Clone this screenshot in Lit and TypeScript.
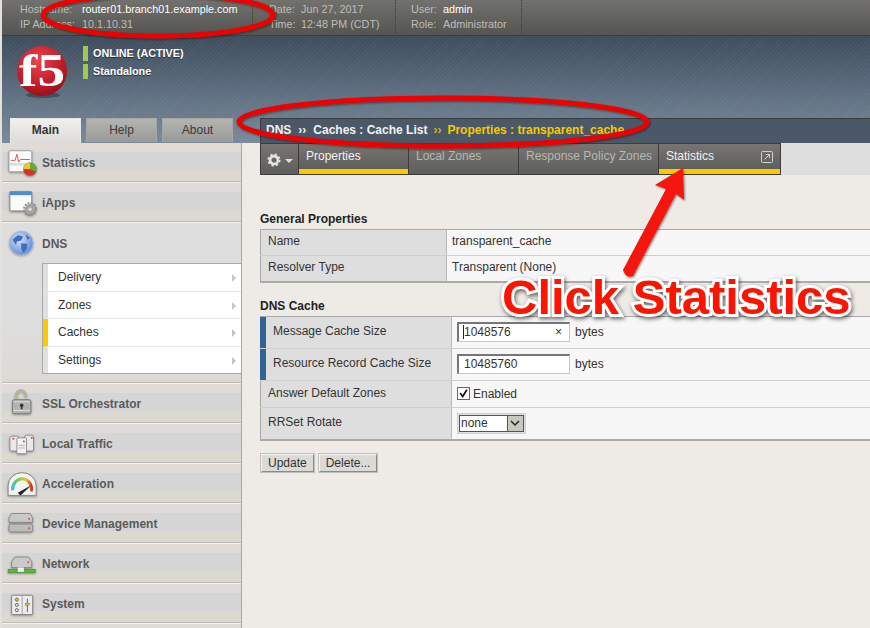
import { LitElement, css, html, svg } from 'lit';
import { customElement } from 'lit/decorators.js';

// sidebar icons, 32x32 viewBox
const icons: Record<string, unknown> = {
  statistics: svg`
    <rect x="0" y="2" width="26" height="24" rx="1" fill="#fbfbfb" stroke="#9a9a9a"/>
    <rect x="1" y="16" width="24" height="3" fill="#cfe0ee"/>
    <path d="M2 13h5l2-7 2 9 2-3h11" fill="none" stroke="#d9473f" stroke-width="1"/>
    <circle cx="24" cy="23" r="7.500" fill="#5fae2e" stroke="#777" stroke-width=".5"/>
    <path d="M24 23v-7.500a7.500 7.500 0 0 0-7.500 7.500z" fill="#f2c230"/>
    <path d="M24 23h-7.500a7.500 7.500 0 0 0 14.300 3z" fill="#d6332b"/>`,
  iapps: svg`
    <rect x="1" y="3" width="25" height="22" rx="1" fill="#fbfbfb" stroke="#7d7d7d"/>
    <rect x="1" y="3" width="25" height="4" fill="#4a8fd6"/>
    <circle cx="24" cy="23" r="6.800" fill="none" stroke="#8a8c8c" stroke-width="2.400" stroke-dasharray="2.200 1.360"/>
    <circle cx="24" cy="23" r="5.800" fill="#a2a4a4"/>
    <circle cx="24" cy="23" r="2" fill="#dcdcdc"/>`,
  dns: svg`
    <defs><radialGradient id="globe" cx=".4" cy=".35" r=".7">
      <stop offset="0" stop-color="#d6e4f8"/><stop offset="1" stop-color="#5a86d6"/>
    </radialGradient></defs>
    <circle cx="14" cy="15" r="13.500" fill="url(#globe)" stroke="#a9b9d6"/>
    <path d="M4 11l6-5 6 1-2 5-5 1-1 4zM14 15l7 1-1 6-4 4-2-5zM19 5l5 4-3 2z" fill="#3f6db8"/>`,
  ssl: svg`
    <path d="M8 12V6a5.500 5.500 0 0 1 11 0v2" fill="none" stroke="#b9b48c" stroke-width="2.600"/>
    <rect x="4" y="11" width="21" height="16" rx="2" fill="#b3b3b0" stroke="#777"/>
    <rect x="5" y="13" width="19" height="1" fill="#e4e4e4"/><rect x="5" y="23" width="19" height="1" fill="#e4e4e4"/>
    <circle cx="14.500" cy="17.500" r="2" fill="#333"/><rect x="13.500" y="18" width="2" height="4" fill="#333"/>`,
  traffic: svg`
    <rect x="1" y="7" width="10" height="17" rx="2" fill="#e8e8e8" stroke="#888"/>
    <rect x="18" y="6" width="10" height="18" rx="2" fill="#e8e8e8" stroke="#888"/>
    <rect x="9" y="9" width="11" height="18" rx="1" fill="#f2f2f2" stroke="#888"/>
    <rect x="11" y="17" width="7" height="1" fill="#aaa"/><rect x="11" y="20" width="7" height="1" fill="#aaa"/>
    <rect x="4" y="9" width="2" height="2" fill="#d9473f"/><rect x="25" y="8" width="2" height="2" fill="#d9473f"/><rect x="16" y="12" width="2" height="2" fill="#d9473f"/>`,
  acceleration: svg`
    <defs><linearGradient id="dial"><stop offset="0" stop-color="#3cc0c0"/><stop offset=".4" stop-color="#8fcf3c"/><stop offset=".7" stop-color="#f2c230"/><stop offset="1" stop-color="#d6332b"/></linearGradient></defs>
    <path d="M-1 29V18a16 15 0 0 1 32 0v11z" fill="#f4f4f2" stroke="#7d7d7d"/>
    <path d="M4 23a11 13 0 0 1 22 0" fill="none" stroke="url(#dial)" stroke-width="3.500"/>
    <path d="M10 26l16-9-13 12z" fill="#222"/>
    <path d="M24 24l3-4v5z" fill="#d6332b"/>`,
  device: svg`
    <path d="M0 9l3-5h21l3 5v5H0z" fill="#c9c9c7" stroke="#858585"/>
    <rect x="0" y="16" width="27" height="9" rx="2" fill="#bcbcba" stroke="#858585"/>
    <rect x="22" y="9" width="2" height="2" fill="#e04a40"/><rect x="22" y="20" width="2" height="2" fill="#e04a40"/>`,
  network: svg`
    <path d="M3 20v-7l4-5h15l4 5v7z" fill="#c9c9c7" stroke="#858585"/>
    <rect x="21" y="13" width="2" height="2" fill="#e04a40"/>
    <rect x="-1" y="22" width="31" height="4" fill="#4fc22f" stroke="#567a4a" stroke-width=".7"/>
    <rect x="10" y="20" width="7" height="5" fill="#f2f2f2"/>`,
  system: svg`
    <rect x="3" y="6" width="24" height="22" rx="1" fill="#ececec" stroke="#7e7e7e"/>
    <path d="M15 6v22" stroke="#999"/>
    <circle cx="9" cy="11" r="1.800" fill="#e8c32c" stroke="#665"/><circle cx="9" cy="17" r="1.800" fill="#ddd" stroke="#665"/><circle cx="9" cy="23" r="1.800" fill="#ddd" stroke="#665"/>
    <path d="M21 10v15" stroke="#555"/><rect x="18.500" y="15" width="5" height="2.500" fill="#e8c32c" stroke="#665" stroke-width=".5"/>`,
};

const gear = svg`<svg width="14" height="14" viewBox="0 0 16 16">
  <circle cx="8" cy="8" r="4.500" fill="none" stroke="#e4e4e4" stroke-width="3"/>
  <circle cx="8" cy="8" r="6.300" fill="none" stroke="#e4e4e4" stroke-width="2.400" stroke-dasharray="2.500 2.450"/>
</svg>`;

@customElement('sidebar-item')
export class SidebarItem extends LitElement {
  static properties = { icon: {}, label: {} };
  icon = '';
  label = '';

  static override styles = css`
    :host {
      display: block;
    }
    .item {
      height: 40px;
      box-sizing: border-box;
      border-bottom: 1px solid #f2f1ee;
      box-shadow: inset 0 -1px 0 #bdbbb7;
      display: flex;
      align-items: center;
      gap: 5px;
      padding: 1px 0 0 7px;
      font: bold 12px 'Liberation Sans', sans-serif;
      color: #5a5a5a;
      background: linear-gradient(#e0dbd8 0 9px, #d5d5d6 9px 27px, #dcd9d3 27px);
    }
    svg {
      width: 28px;
      height: 28px;
      flex: none;
      overflow: visible;
      filter: drop-shadow(0 1px 1px rgba(0, 0, 0, 0.35));
    }
  `;

  override render() {
    return html`<div class="item">
      <svg viewBox="0 0 32 32">${icons[this.icon]}</svg><span>${this.label}</span>
    </div>`;
  }
}

@customElement('app-root')
export class AppRoot extends LitElement {
  static override styles = css`
    :host {
      display: block;
      position: relative;
      width: 870px;
      height: 628px;
      overflow: hidden;
      box-sizing: border-box;
      padding-left: 2px;
      background: #e4e1dc;
      font: 12px 'Liberation Sans', Arial, sans-serif;
      color: #333;
    }

    .topbar {
      height: 35px;
      border-bottom: 1px solid #3e3e3c;
      background: linear-gradient(#72716e, #545451);
      display: flex;
      color: #bdbdb9;
      line-height: 15px;
      font-size: 10.800px;
      white-space: nowrap;
    }
    .topbar .group {
      padding: 2px 0 0 0;
      display: grid;
      box-sizing: border-box;
      align-content: start;
      border-right: 1px dotted #3c3c3a;
      margin-bottom: 2px;
    }
    .topbar .g1 {
      padding-left: 18px;
      width: 251px;
      grid-template-columns: 62px auto;
    }
    .topbar .g2 {
      padding-left: 16px;
      width: 143px;
      grid-template-columns: 32px auto;
    }
    .topbar .g3 {
      padding-left: 15px;
      width: 126px;
      grid-template-columns: 32px auto;
    }
    .topbar b {
      font-weight: normal;
      color: #fff;
    }

    .banner {
      height: 107px;
      position: relative;
      display: flex;
      flex-direction: column;
      justify-content: space-between;
      background:
        repeating-linear-gradient(135deg, rgba(255, 255, 255, 0.035) 0 1px, transparent 1px 3px),
        linear-gradient(#3e4c5c, #5f7082 55%, #798a9a);
    }
    .brand {
      display: flex;
      padding: 9px 0 0 14px;
      gap: 13px;
    }
    .logo {
      width: 54px;
      height: 54px;
      margin-top: 1px;
      flex: none;
    }
    .status {
      font-weight: bold;
      font-size: 10.800px;
      color: #fff;
      text-shadow: 0 1px 1px rgba(0, 0, 0, 0.5);
    }
    .status div {
      height: 15px;
      line-height: 15px;
      border-left: 5px solid #9ccb4f;
      padding-left: 5px;
      margin: 1px 0 3px;
    }
    .nav {
      display: flex;
      align-items: flex-end;
    }
    .tabs {
      width: 258px;
      box-sizing: border-box;
      padding-left: 8px;
      display: flex;
      gap: 5px;
      flex: none;
    }
    .tab {
      width: 71px;
      height: 24px;
      line-height: 23px;
      text-align: center;
      background: linear-gradient(#b4b4b2, #999996);
      border: 1px solid #a6a6a4;
      border-bottom: 0;
      box-sizing: border-box;
      color: #3a3a3a;
    }
    .tab.on {
      height: 25px;
      font-weight: bold;
      color: #333;
      background: linear-gradient(#f2f0ee, #dcdad7);
      border-color: #e8e8e8;
    }
    .crumbs {
      flex: 1;
      height: 24px;
      line-height: 23px;
      border: 1px solid #363c42;
      border-right: 0;
      border-bottom: 0;
      padding-left: 5px;
      background: #4a5868;
      font-weight: bold;
      color: #f2f2f2;
      white-space: nowrap;
    }
    .crumbs i {
      font-style: normal;
      padding: 0 7px;
    }
    .crumbs i.sep {
      padding: 0 6px;
      color: #d6b130;
    }
    .crumbs .cur {
      color: #f9c900;
    }

    .main {
      display: flex;
      height: 485px;
    }
    .side {
      width: 240px;
      flex: none;
      border-right: 1px solid #a6a6a4;
      box-sizing: border-box;
      background: #dfdcd7;
    }
    .dns {
      height: 161px;
      box-sizing: border-box;
      border-bottom: 1px solid #f2f1ee;
      box-shadow: inset 0 -1px 0 #bdbbb7;
      background: linear-gradient(#dedede 0 60%, #dcd9d5);
    }
    .dns .head {
      display: flex;
      gap: 5px;
      align-items: center;
      height: 40px;
      box-sizing: border-box;
      padding: 1px 0 0 7px;
      font-weight: bold;
      color: #5a5a5a;
    }
    .dns .head svg {
      width: 28px;
      height: 28px;
      overflow: visible;
      filter: drop-shadow(0 1px 1px rgba(0, 0, 0, 0.3));
    }
    .sub {
      margin: 0 0 0 40px;
      border: 1px solid #a9a9a9;
      border-right: 0;
      background: #fff;
    }
    .sub div {
      height: 26.500px;
      line-height: 26px;
      border-left: 5px solid #e0e0e0;
      border-bottom: 1px solid #e6e6e6;
      padding-left: 10px;
      position: relative;
    }
    .sub div:last-child {
      border-bottom: 0;
    }
    .sub .on {
      border-left-color: #fcc800;
    }
    .sub div::after {
      content: '';
      position: absolute;
      right: 5px;
      top: 10px;
      border-left: 4px solid #c4c4c4;
      border-top: 4px solid transparent;
      border-bottom: 4px solid transparent;
    }

    .content {
      flex: 1;
      background: #eeebe7;
      min-width: 0;
    }
    .subtabs {
      display: flex;
      height: 32px;
      background: #dedede;
      margin-left: 18px;
    }
    .subtab {
      height: 32px;
      box-sizing: border-box;
      border: 1px solid #3c3c3c;
      border-left: 0;
      background: linear-gradient(#787572, #5e5e5a);
      color: #b8b8b4;
      padding: 5px 0 0 7px;
      position: relative;
    }
    .subtab.gear {
      width: 39px;
      border-left: 1px solid #3c3c3c;
      padding: 9px 0 0 6px;
      display: flex;
      gap: 4px;
    }
    .subtab.gear::after {
      content: '';
      margin-top: 6px;
      border-top: 4px solid #ddd;
      border-left: 4px solid transparent;
      border-right: 4px solid transparent;
      height: 0;
    }
    .subtab.on {
      color: #f2f2f2;
      background: linear-gradient(#787572, #5e5e5a 25px, #fcc800 25px);
    }
    .ext {
      position: absolute;
      right: 7px;
      top: 7px;
    }

    h4 {
      margin: 0;
      font-size: 12px;
      line-height: 14px;
      color: #222;
      margin-left: 18px;
    }
    .general {
      margin-top: 37px;
    }
    .cache {
      margin-top: 16px;
    }
    .table {
      margin: 3px 0 0 18px;
      border-top: 1px solid #aaa;
      border-bottom: 2px solid #aaa;
      background: #f7f7f7;
    }
    .row {
      display: grid;
      grid-template-columns: 187px 1fr;
      border-bottom: 1px solid #cfcfcf;
    }
    .row:last-child {
      border-bottom: 0;
    }
    .table.wide .row {
      grid-template-columns: 192px 1fr;
    }
    .cell-l {
      background: #dedede;
      border-left: 1px solid #aaa;
      border-right: 1px solid #bbb;
      padding: 5px 0 0 7px;
      box-sizing: border-box;
    }
    .cell-l.req {
      border-left: 6px solid #2f6496;
      padding-left: 7px;
    }
    .cell-r {
      padding: 5px 0 0 5px;
    }
    .r1 { height: 25px; }
    .r3 { height: 31px; }
    .r4 { height: 26px; }
    .r5 { height: 31px; }
    .r1 .cell-l, .r1 .cell-r {
      padding-top: 4px;
    }
    .r3 .cell-l, .r5 .cell-l {
      padding-top: 7px;
    }
    .field {
      display: flex;
      gap: 5px;
    }
    .field .unit {
      padding-top: 3px;
    }
    .input {
      width: 113px;
      height: 20px;
      box-sizing: border-box;
      border: 1px solid #c8c8c8;
      border-top: 2px solid #777;
      border-left: 2px solid #777;
      background: #fff;
      padding-left: 5px;
      line-height: 17px;
      display: flex;
      justify-content: space-between;
      color: #333;
    }
    .input .clear {
      padding-right: 7px;
    }
    .caret {
      border-left: 1px solid #222;
      margin-left: -1px;
    }
    .check {
      display: flex;
      gap: 3px;
    }
    .check span {
      padding-top: 1px;
    }
    .box {
      width: 13px;
      height: 13px;
      box-sizing: border-box;
      border: 1px solid #666;
      background: #fff;
      margin-top: 1px;
    }
    .select {
      width: 69px;
      height: 21px;
      box-sizing: border-box;
      background: #e0e0e0;
      border: 1px solid #d0d0d0;
      padding: 1px;
      display: flex;
    }
    .select .val {
      flex: 1;
      background: #fff;
      border: 1px solid #555;
      border-right: 0;
      padding-left: 1px;
      line-height: 15px;
    }
    .select .btn {
      width: 17px;
      border: 1px solid #555;
      background: #c8c8c0;
      box-sizing: border-box;
    }
    .buttons {
      display: flex;
      gap: 4px;
      margin: 13px 0 0 18px;
    }
    .button {
      height: 18px;
      line-height: 17px;
      padding: 0 6px;
      box-sizing: border-box;
      background: #dcdad6;
      border: 1px solid #8a8a88;
      border-top-color: #f4f4f4;
      border-left-color: #f4f4f4;
      box-shadow: 0 0 0 1px #c0beba;
      margin-left: 1px;
      color: #333;
    }

    /* annotation layer drawn over the screenshot */
    .marks {
      position: absolute;
      left: 0;
      top: 0;
      pointer-events: none;
    }
    .callout {
      position: absolute;
      left: 502px;
      top: 269px;
      font: bold 49px/56px 'Liberation Sans', Arial, sans-serif;
      color: #fb1400;
      white-space: nowrap;
      -webkit-text-stroke: 6px #fff;
      paint-order: stroke fill;
      filter: drop-shadow(1px 2px 2px rgba(0, 0, 0, 0.6));
    }
  `;

  override render() {
    return html`
      <div class="topbar">
        <div class="group g1">
          <span>Hostname:</span><b>router01.branch01.example.com</b>
          <span>IP Address:</span><span>10.1.10.31</span>
        </div>
        <div class="group g2">
          <span>Date:</span><span>Jun 27, 2017</span>
          <span>Time:</span><span>12:48 PM (CDT)</span>
        </div>
        <div class="group g3">
          <span>User:</span><b>admin</b>
          <span>Role:</span><span>Administrator</span>
        </div>
      </div>

      <div class="banner">
        <div class="brand">
          <svg class="logo" viewBox="0 0 54 54">
            <defs>
              <radialGradient id="ball" cx=".42" cy=".3" r=".75">
                <stop offset="0" stop-color="#e8454e" />
                <stop offset=".7" stop-color="#bb1a24" />
                <stop offset="1" stop-color="#8c1018" />
              </radialGradient>
            </defs>
            <ellipse cx="27" cy="49" rx="17" ry="3" fill="rgba(0,0,0,.3)" />
            <circle cx="26" cy="25" r="25" fill="url(#ball)" />
            <text
              x="3"
              y="40"
              font-family="Liberation Serif, serif"
              font-weight="bold"
              font-size="46"
              textLength="46"
              lengthAdjust="spacingAndGlyphs"
              fill="#fff"
            >f5</text>
          </svg>
          <div class="status">
            <div>ONLINE (ACTIVE)</div>
            <div>Standalone</div>
          </div>
        </div>
        <div class="nav">
          <div class="tabs">
            <div class="tab on">Main</div>
            <div class="tab">Help</div>
            <div class="tab">About</div>
          </div>
          <div class="crumbs">
            DNS<i>››</i>Caches : Cache List<i class="sep">››</i><span class="cur"
              >Properties : transparent_cache</span
            >
          </div>
        </div>
      </div>

      <div class="main">
        <div class="side">
          <sidebar-item icon="statistics" label="Statistics"></sidebar-item>
          <sidebar-item icon="iapps" label="iApps"></sidebar-item>
          <div class="dns">
            <div class="head"><svg viewBox="0 0 32 32">${icons.dns}</svg>DNS</div>
            <div class="sub">
              <div>Delivery</div>
              <div>Zones</div>
              <div class="on">Caches</div>
              <div>Settings</div>
            </div>
          </div>
          <sidebar-item icon="ssl" label="SSL Orchestrator"></sidebar-item>
          <sidebar-item icon="traffic" label="Local Traffic"></sidebar-item>
          <sidebar-item icon="acceleration" label="Acceleration"></sidebar-item>
          <sidebar-item icon="device" label="Device Management"></sidebar-item>
          <sidebar-item icon="network" label="Network"></sidebar-item>
          <sidebar-item icon="system" label="System"></sidebar-item>
        </div>

        <div class="content">
          <div class="subtabs">
            <div class="subtab gear">${gear}</div>
            <div class="subtab on" style="width:110px">Properties</div>
            <div class="subtab" style="width:110px">Local Zones</div>
            <div class="subtab" style="width:140px">Response Policy Zones</div>
            <div class="subtab on" style="width:122px">
              Statistics
              <svg class="ext" width="12" height="12" viewBox="0 0 12 12">
                <rect x=".5" y=".5" width="11" height="11" rx="1" fill="none" stroke="#cfcfcf" />
                <path d="M3.500 8.500L8.500 3.500M5 3.500h3.500V7" fill="none" stroke="#cfcfcf" />
              </svg>
            </div>
          </div>

          <h4 class="general">General Properties</h4>
          <div class="table">
            <div class="row r1">
              <div class="cell-l">Name</div>
              <div class="cell-r">transparent_cache</div>
            </div>
            <div class="row r1">
              <div class="cell-l">Resolver Type</div>
              <div class="cell-r">Transparent (None)</div>
            </div>
          </div>

          <h4 class="cache">DNS Cache</h4>
          <div class="table wide">
            <div class="row r3">
              <div class="cell-l req">Message Cache Size</div>
              <div class="cell-r">
                <div class="field">
                  <div class="input"><div><span class="caret"></span>1048576</div><span class="clear">×</span></div>
                  <span class="unit">bytes</span>
                </div>
              </div>
            </div>
            <div class="row r3">
              <div class="cell-l req">Resource Record Cache Size</div>
              <div class="cell-r">
                <div class="field"><div class="input"><div>10485760</div></div><span class="unit">bytes</span></div>
              </div>
            </div>
            <div class="row r4">
              <div class="cell-l">Answer Default Zones</div>
              <div class="cell-r">
                <div class="check">
                  <svg class="box" viewBox="0 0 13 13">
                    <path d="M2.500 6l3 4 5-8" fill="none" stroke="#111" stroke-width="2" />
                  </svg>
                  <span>Enabled</span>
                </div>
              </div>
            </div>
            <div class="row r5">
              <div class="cell-l">RRSet Rotate</div>
              <div class="cell-r">
                <div class="select">
                  <div class="val">none</div>
                  <div class="btn">
                    <svg width="15" height="15" viewBox="0 0 15 15">
                      <path d="M3 5l4 4 4-4" fill="none" stroke="#222" stroke-width="1.500" />
                    </svg>
                  </div>
                </div>
              </div>
            </div>
          </div>

          <div class="buttons">
            <div class="button">Update</div>
            <div class="button">Delete...</div>
          </div>
        </div>
      </div>

      <svg class="marks" width="870" height="628" viewBox="0 0 870 628">
        <defs>
          <filter id="soft" x="-10%" y="-30%" width="120%" height="160%">
            <feDropShadow dx="1" dy="1" stdDeviation="1" flood-color="#000" flood-opacity=".5" />
          </filter>
        </defs>
        <ellipse cx="158" cy="15" rx="115" ry="21" fill="none" stroke="#ee0000" stroke-width="5" filter="url(#soft)" />
        <ellipse cx="443" cy="122" rx="204" ry="24" fill="none" stroke="#ee0000" stroke-width="5" filter="url(#soft)" />
        <path
          d="M623 270L666 189L655 185L683 168L684 200L676 194L633 276Q626 279 623 270Z"
          fill="#f5140a"
          filter="url(#soft)"
        />
      </svg>
      <div class="callout">Click Statistics</div>
    `;
  }
}
